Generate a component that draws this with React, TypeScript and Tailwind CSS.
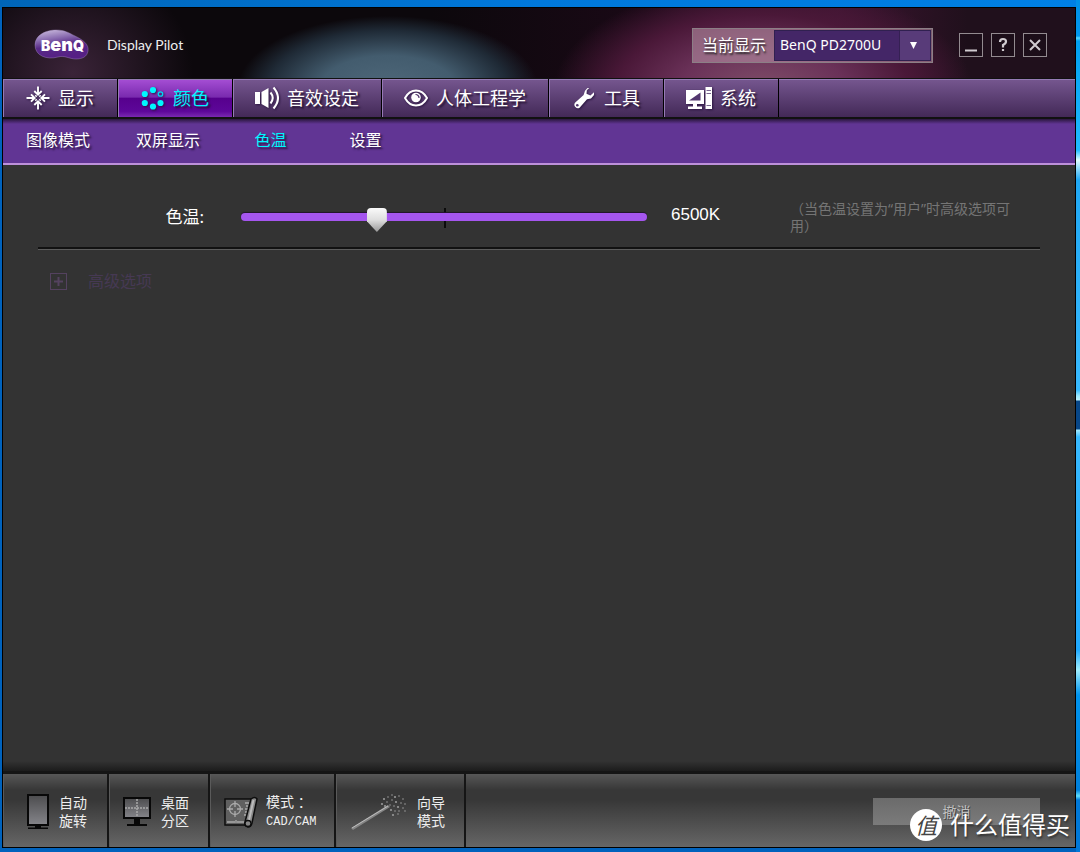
import { useState, type ReactNode } from "react";
import { clsx } from "clsx";

interface NavItem {
  label: string;
  icon: ReactNode;
}

function DisplayIcon() {
  return (
    <svg width="24" height="24" viewBox="0 0 24 24" fill="none" stroke="white" strokeWidth="1.9">
      <path d="M12 0.500V8M12 16V23.500M0.500 12H8M16 12H23.500" />
      <path d="M8.300 5 12 8.700 15.700 5M8.300 19 12 15.300 15.700 19M5 8.300 8.700 12 5 15.700M19 8.300 15.300 12 19 15.700" />
      <path d="M9.300 9.300l1.400 1.400M14.700 9.300l-1.400 1.400M9.300 14.700l1.400-1.400M14.700 14.700l-1.400-1.400" strokeWidth="1.500" />
    </svg>
  );
}

function ColorIcon() {
  return (
    <svg width="24" height="24" viewBox="0 0 24 24" fill="#00f6ff">
      <circle cx="12" cy="4" r="3.100" />
      <circle cx="3.800" cy="8" r="3.100" />
      <circle cx="3.800" cy="17" r="3.100" />
      <circle cx="12" cy="20.500" r="3.100" />
      <circle cx="19.500" cy="17" r="3.100" />
      <circle cx="19.500" cy="8" r="2.200" fill="none" stroke="#00d9f2" strokeWidth="1.300" />
    </svg>
  );
}

function SoundIcon() {
  return (
    <svg width="24" height="24" viewBox="0 0 24 24" fill="white">
      <path d="M0 6h5v12H0zM6.500 6 13.500 2v20L6.500 18z" />
      <path d="M15.500 6.500q4.500 5.500 0 11M18.500 1.500q9 10.500 0 21" fill="none" stroke="white" strokeWidth="2" />
    </svg>
  );
}

function EyeIcon() {
  return (
    <svg width="24" height="24" viewBox="0 0 24 24">
      <path d="M1 12C6.500 2 17.500 2 23 12 17.500 22 6.500 22 1 12Z" fill="none" stroke="white" strokeWidth="2" />
      <circle cx="12" cy="11.500" r="4.800" fill="white" />
      <path d="M11.500 8.500a3.300 3.300 0 0 1 3.500 3.500" fill="none" stroke="#53376f" strokeWidth="1.200" />
    </svg>
  );
}

function WrenchIcon() {
  return (
    <svg width="24" height="24" viewBox="0 0 24 24">
      <path
        d="M15.500 2 13 4.800 11.600 9 3 16.700a3.500 3.500 0 0 0 4.600 5L15 13.300l4-.8L22 9V6.300l-3.600 3.200-3.900-1.700.3-3.600L17.200 2Z"
        fill="white"
      />
      <circle cx="5.300" cy="19.200" r="1.300" fill="#53376f" />
    </svg>
  );
}

function SystemIcon() {
  return (
    <svg width="26" height="24" viewBox="0 0 26 24" fill="white">
      <path d="M0 4h18v14H0z" />
      <path d="M14.500 6.500v8H3z" fill="#53376f" />
      <path d="M7 18h4v3H7zM2 20.500h14V23H2zM19.500 1H26v22h-6.500z" />
      <path d="M20.500 4.500H25M20.500 7.500H25M20.500 19.500H25" stroke="#77658d" strokeWidth="1" />
    </svg>
  );
}

function BenqLogo() {
  return (
    <svg width="56" height="32" viewBox="0 0 56 32" role="img" aria-label="BenQ">
      <defs>
        <linearGradient id="bean" x1="0" y1="0" x2="0.300" y2="1">
          <stop offset="0" stopColor="#d3c6e4" />
          <stop offset="0.350" stopColor="#8c6fb2" />
          <stop offset="0.600" stopColor="#582a87" />
          <stop offset="1" stopColor="#562085" />
        </linearGradient>
      </defs>
      <path
        d="M1 16C1 6 12 1 22 1c9 0 13 3 19 6 8 4 14 8 13 15-1 6-6 8-12 8-7 0-11-4-18-2C13 31 1 27 1 16Z"
        fill="url(#bean)"
        stroke="#a88fc4"
        strokeOpacity="0.500"
        strokeWidth="0.800"
      />
      <text x="7" y="22" fill="white" fontFamily="Inter, sans-serif" fontWeight="900" fontSize="14">
        B<tspan fontSize="18">en</tspan>Q
      </text>
    </svg>
  );
}

function RotateIcon() {
  return (
    <svg width="22" height="36" viewBox="0 0 22 36">
      <rect x="1" y="1" width="20" height="30" fill="url(#screen)" stroke="#080808" strokeWidth="2" />
      <path d="M8 32h6v2H8zM1 33.500h20V35H1z" fill="#080808" />
    </svg>
  );
}

function PartitionIcon() {
  return (
    <svg width="28" height="30" viewBox="0 0 28 30">
      <rect x="1" y="1" width="26" height="20" fill="url(#screen)" stroke="#080808" strokeWidth="2" />
      <path d="M14 2v18M2 11h24" stroke="#aaa" strokeWidth="1.500" strokeDasharray="2 1" />
      <path d="M11 21h6v6h-6zM4 27h20v2H4z" fill="#080808" />
    </svg>
  );
}

function CadIcon() {
  return (
    <svg width="34" height="32" viewBox="0 0 34 32">
      <path d="M1 3h27l-4 26H1z" fill="#606060" stroke="#0d0d0d" strokeWidth="1.500" />
      <g fill="none" stroke="#aaa" strokeWidth="1.300">
        <circle cx="11" cy="13" r="5.500" />
        <path d="M11 5v6M11 15v6M3 13h6M13 13h6M3 26h8M13 26h8M12 24v3M21 7h4M22 10h2M21 13h3M21 16h2M20 19h3" />
      </g>
      <path d="M27 3q4-3 6 0l-5 24q-1 4-4 4-4-1-3-5Z" fill="#888" stroke="#0d0d0d" strokeWidth="1.500" />
      <path d="m29.500 4-4.500 20" stroke="#bbb" strokeWidth="2" />
      <circle cx="24" cy="27.500" r="3" fill="#858585" stroke="#0d0d0d" strokeWidth="1.300" />
    </svg>
  );
}

const sparks = [
  [33, 5], [37, 3], [41, 1], [44, 3], [48, 2], [52, 5], [31, 10], [36, 8], [41, 6], [45, 8], [50, 9], [54, 10],
  [34, 12], [39, 11], [43, 12], [47, 13], [52, 14], [54, 17], [40, 16], [44, 17], [48, 17], [42, 21], [47, 20],
];

function WandIcon() {
  return (
    <svg width="56" height="36" viewBox="0 0 56 36">
      <path d="M0 34 37 11l2 2L2 36Z" fill="#858585" />
      <path d="M1 34 37 12" stroke="#bdbdbd" strokeWidth="1" />
      {sparks.map(([x, y], idx) => (
        <circle key={idx} cx={x} cy={y} r={idx % 3 === 0 ? 1.1 : 0.8} fill="#999" />
      ))}
    </svg>
  );
}

const navItems: NavItem[] = [
  { label: "显示", icon: <DisplayIcon /> },
  { label: "颜色", icon: <ColorIcon /> },
  { label: "音效设定", icon: <SoundIcon /> },
  { label: "人体工程学", icon: <EyeIcon /> },
  { label: "工具", icon: <WrenchIcon /> },
  { label: "系统", icon: <SystemIcon /> },
];

const subItems = ["图像模式", "双屏显示", "色温", "设置"];

function Header() {
  return (
    <header className="flex h-[70px] items-center bg-[#0c080c] bg-[radial-gradient(ellipse_120px_110px_at_70px_65px,#3a2338,transparent),radial-gradient(ellipse_150px_72px_at_385px_80px,#4f687a,#435c6e_45%,#1f2a36_80%,transparent),radial-gradient(ellipse_210px_110px_at_760px_84px,#80506a,#6a3158_40%,#4a1838_70%,transparent),linear-gradient(90deg,#0c080c_40%,#1a0916_60%,#3c1430_78%,#20101c_90%,#20101c)] pt-1 pr-7 pl-[31px]">
      <BenqLogo />
      <h1 className="ml-[17px] font-[Lato,sans-serif] text-sm text-[#eee]">Display Pilot</h1>
      <div className="ml-auto flex h-[35px] items-center border border-[#8c7f86] bg-[#b68fa3]/60 pr-px pl-[9px]">
        <label htmlFor="monitor" className="pr-2 text-base text-white [text-shadow:1px_2px_2px_#222]">
          当前显示
        </label>
        <div className="relative">
          <select
            id="monitor"
            className="block h-[31px] w-[157px] appearance-none border border-[#302050] bg-[linear-gradient(90deg,#442667_124px,#352053_124px,#352053_125px,#583b79_125px)] pl-[5px] font-['Noto_Sans',sans-serif] text-sm text-white outline-none"
          >
            <option>BenQ PD2700U</option>
          </select>
          <svg className="pointer-events-none absolute top-3 right-[14px]" width="7" height="7" viewBox="0 0 7 7">
            <path d="M0 0h7L3.500 7Z" fill="white" />
          </svg>
        </div>
      </div>
      <div className="ml-[26px] flex gap-2">
        <WindowButton label="最小化">
          <path d="M6 17.500h12" strokeWidth="2" />
        </WindowButton>
        <WindowButton label="帮助">
          <path d="M9 9q0-3 3-3t3 2.500q0 2-3 3.500v2.500M12 16v2" strokeWidth="2.200" />
        </WindowButton>
        <WindowButton label="关闭">
          <path d="m7 7 10 10M17 7 7 17" strokeWidth="2" />
        </WindowButton>
      </div>
    </header>
  );
}

function WindowButton({ label, children }: { label: string; children: ReactNode }) {
  return (
    <button aria-label={label} className="size-6 border border-[#938b90] bg-black/10">
      <svg className="-m-px" width="24" height="24" viewBox="0 0 24 24" fill="none" stroke="#d0cbd0">
        {children}
      </svg>
    </button>
  );
}

function FooterButton({ icon, className, children }: { icon: ReactNode; className: string; children: ReactNode }) {
  return (
    <button
      className={clsx(
        "flex items-center border-r-2 border-[#151515] pt-[2px] text-left text-sm leading-[18px] text-[#eee] shadow-[inset_1px_0_#5a5a5a]",
        className
      )}
    >
      {icon}
      <span>{children}</span>
    </button>
  );
}

export default function App() {
  const [tab, setTab] = useState("颜色");
  const [sub, setSub] = useState("色温");
  const [temperature, setTemperature] = useState(6500);

  return (
    <div className="relative flex min-h-screen flex-col bg-[#0062bd] bg-[linear-gradient(#0090e8,#0098ed_36px,#55d8ff_38px,#00a0f0_41px,#20baff_150px,#e0ffff_160px,#20a8f4_180px,#38baff_390px,#9deaff_396px,#bdf2ff_400px,#084788_401px,#084788_429px,#a4ebff_430px,#38baff_437px,#20aaff_650px,#a0efff_670px,#0094ee_695px,#0080dc_790px,#60e0ff_796px,#0078d8_800px),linear-gradient(90deg,#0065b8,#0078db_50%,#0080e5)] bg-[size:4px_100%,100%_8px] bg-[position:right_top,left_top] bg-no-repeat pt-[7px] pr-1 pb-1 pl-[2px] font-['Noto_Sans','Noto_Sans_CJK_SC',sans-serif]">
      <div className="flex flex-1 flex-col border border-black bg-[#333]">
        <Header />

        <nav className="flex h-[41px] border-t border-b-2 border-[#111] bg-linear-to-b from-[#765790] to-[#432957] shadow-[inset_0_1px_#967bb5]">
          {navItems.map((item) => (
            <button
              key={item.label}
              onClick={() => setTab(item.label)}
              className={clsx(
                "flex min-w-[115px] items-center justify-center gap-2 border-r border-black px-[22px] text-lg leading-6 shadow-[inset_1px_1px_#967bb5]",
                tab === item.label
                  ? "bg-[linear-gradient(#a64fd5,#792aae_48%,#56008d_50%,#5d0799_85%,#7929b0)] text-[#00f6ff]"
                  : "text-white"
              )}
            >
              <span className="shrink-0 drop-shadow-[1px_1px_1px_#2a1540]">{item.icon}</span>
              <span className="[text-shadow:2px_2px_2px_#22102f]">{item.label}</span>
            </button>
          ))}
        </nav>

        <div className="flex h-[46px] border-b-2 border-[#bd90da] bg-[linear-gradient(#2a163d,#613594_5px)] pb-[2px]">
          {subItems.map((label) => (
            <button
              key={label}
              onClick={() => setSub(label)}
              className={clsx(
                "min-w-[95px] px-[23px] text-base [text-shadow:2px_2px_2px_#2a1540]",
                sub === label ? "text-[#00f6ff]" : "text-white"
              )}
            >
              {label}
            </button>
          ))}
        </div>

        <main className="flex-1 bg-[linear-gradient(0deg,#1c1c1c,transparent_10px)] px-[35px]">
          <div className="flex h-[84px] items-center border-b-2 border-[#111] pt-[22px] pr-5 shadow-[0_1px_#5c5c5c]">
            <label htmlFor="temperature" className="w-[166px] text-right text-[17px] leading-6 text-white">
              色温:
            </label>
            <div className="relative ml-[37px] flex flex-1">
              <div className="absolute top-[3px] left-1/2 h-5 w-[2px] bg-[#0b0b0b]" />
              <input
                id="temperature"
                type="range"
                min={5000}
                max={9600}
                step={100}
                value={temperature}
                onChange={(e) => setTemperature(Number(e.target.value))}
                className="relative h-6 w-full appearance-none bg-transparent outline-none [&::-webkit-slider-runnable-track]:h-2 [&::-webkit-slider-runnable-track]:rounded-full [&::-webkit-slider-runnable-track]:bg-[#a556ef] [&::-webkit-slider-runnable-track]:shadow-[0_-1px_1px_#22152d] [&::-webkit-slider-thumb]:-mt-[5px] [&::-webkit-slider-thumb]:h-6 [&::-webkit-slider-thumb]:w-5 [&::-webkit-slider-thumb]:appearance-none [&::-webkit-slider-thumb]:rounded-t-sm [&::-webkit-slider-thumb]:bg-linear-to-b [&::-webkit-slider-thumb]:from-[#fafafa] [&::-webkit-slider-thumb]:via-[#dedede] [&::-webkit-slider-thumb]:to-[#999] [&::-webkit-slider-thumb]:[clip-path:polygon(0_0,100%_0,100%_55%,50%_100%,0_55%)]"
              />
            </div>
            <output
              htmlFor="temperature"
              className="ml-6 w-[119px] pb-1 font-['Liberation_Sans',sans-serif] text-[17px] leading-6 text-white"
            >
              {temperature}K
            </output>
            <p className="w-[230px] text-sm leading-[17px] text-[#757575]">（当色温设置为“用户”时高级选项可用）</p>
          </div>

          <button disabled className="mt-5 ml-3 flex items-center gap-[21px] text-base leading-6 text-[#463953]">
            <svg width="17" height="17" viewBox="0 0 17 17" fill="none" stroke="#54425f">
              <rect x="0.500" y="0.500" width="16" height="16" />
              <path d="M4 8.500h9M8.500 4v9" strokeWidth="2" />
            </svg>
            高级选项
          </button>
        </main>

        <footer className="flex h-[76px] border-t-[3px] border-[#151515] bg-[linear-gradient(#575757,#373737_22%,#373737_35%,#666)]">
          <svg className="absolute size-0">
            <defs>
              <linearGradient id="screen" x1="0" y1="0" x2="0" y2="1">
                <stop offset="0" stopColor="#4c4c4e" />
                <stop offset="1" stopColor="#85858a" />
              </linearGradient>
            </defs>
          </svg>
          <FooterButton icon={<RotateIcon />} className="w-[106px] gap-[10px] pl-6">
            自动
            <br />
            旋转
          </FooterButton>
          <FooterButton icon={<PartitionIcon />} className="w-[101px] gap-[10px] pl-[14px]">
            桌面
            <br />
            分区
          </FooterButton>
          <FooterButton icon={<CadIcon />} className="w-[126px] gap-2 pl-[14px]">
            模式 ：
            <br />
            <span className="font-['Liberation_Mono',monospace] text-xs leading-[18px]">CAD/CAM</span>
          </FooterButton>
          <FooterButton icon={<WandIcon />} className="w-[130px] gap-[10px] pl-[15px]">
            向导
            <br />
            模式
          </FooterButton>
          <button
            disabled
            className="mt-6 mr-[35px] ml-auto h-[27px] w-[167px] bg-linear-to-b from-[#6b6b6b] to-[#7b7b7b] text-sm text-[#c0c0c0] [text-shadow:1px_1px_#444]"
          >
            撤消
          </button>
        </footer>
      </div>

      <div className="pointer-events-none absolute right-[10px] bottom-[11px] flex items-center gap-2 text-2xl leading-8 text-white [text-shadow:1px_2px_2px_#333]">
        <span className="flex size-8 items-center justify-center rounded-full bg-white text-[22px] text-[#444] italic [text-shadow:none]">
          值
        </span>
        什么值得买
      </div>
    </div>
  );
}
